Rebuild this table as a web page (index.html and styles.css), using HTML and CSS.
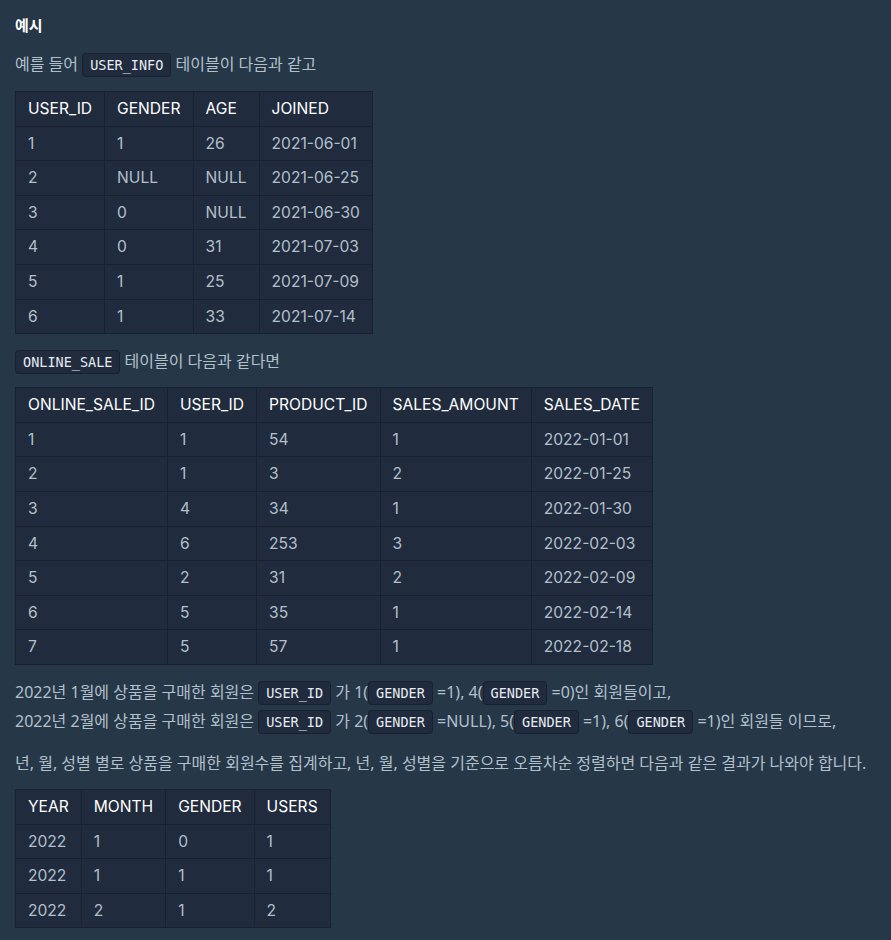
FILE: index.html
```html
<!DOCTYPE html>
<html lang="ko">
<head>
<meta charset="utf-8">
<link rel="stylesheet" href="styles.css">
</head>
<body>
<div class="markdown">
<h5 class="title">예시</h5>
<p class="para">예를 들어 <code>USER_INFO</code> 테이블이 다음과 같고</p>
<table class="tbl">
<thead><tr><th>USER_ID</th><th>GENDER</th><th>AGE</th><th>JOINED</th></tr></thead>
<tbody>
<tr><td>1</td><td>1</td><td>26</td><td>2021-06-01</td></tr>
<tr><td>2</td><td>NULL</td><td>NULL</td><td>2021-06-25</td></tr>
<tr><td>3</td><td>0</td><td>NULL</td><td>2021-06-30</td></tr>
<tr><td>4</td><td>0</td><td>31</td><td>2021-07-03</td></tr>
<tr><td>5</td><td>1</td><td>25</td><td>2021-07-09</td></tr>
<tr><td>6</td><td>1</td><td>33</td><td>2021-07-14</td></tr>
</tbody>
</table>
<p class="para tight">
<code>ONLINE_SALE</code> 테이블이 다음과 같다면</p>
<table class="tbl">
<thead><tr><th>ONLINE_SALE_ID</th><th>USER_ID</th><th>PRODUCT_ID</th><th>SALES_AMOUNT</th><th>SALES_DATE</th></tr></thead>
<tbody>
<tr><td>1</td><td>1</td><td>54</td><td>1</td><td>2022-01-01</td></tr>
<tr><td>2</td><td>1</td><td>3</td><td>2</td><td>2022-01-25</td></tr>
<tr><td>3</td><td>4</td><td>34</td><td>1</td><td>2022-01-30</td></tr>
<tr><td>4</td><td>6</td><td>253</td><td>3</td><td>2022-02-03</td></tr>
<tr><td>5</td><td>2</td><td>31</td><td>2</td><td>2022-02-09</td></tr>
<tr><td>6</td><td>5</td><td>35</td><td>1</td><td>2022-02-14</td></tr>
<tr><td>7</td><td>5</td><td>57</td><td>1</td><td>2022-02-18</td></tr>
</tbody>
</table>
<p class="para two">2022년 1월에 상품을 구매한 회원은 <code>USER_ID</code> 가 1(<code>GENDER</code> =1), 4(<code>GENDER</code> =0)인 회원들이고,<br>2022년 2월에 상품을 구매한 회원은 <code>USER_ID</code> 가 2(<code>GENDER</code> =NULL), 5(<code>GENDER</code> =1), 6(<code>GENDER</code> =1)인 회원들 이므로,</p>
<p class="para tight">년, 월, 성별 별로 상품을 구매한 회원수를 집계하고, 년, 월, 성별을 기준으로 오름차순 정렬하면 다음과 같은 결과가 나와야 합니다.</p>
<table class="tbl">
<thead><tr><th>YEAR</th><th>MONTH</th><th>GENDER</th><th>USERS</th></tr></thead>
<tbody>
<tr><td>2022</td><td>1</td><td>0</td><td>1</td></tr>
<tr><td>2022</td><td>1</td><td>1</td><td>1</td></tr>
<tr><td>2022</td><td>2</td><td>1</td><td>2</td></tr>
</tbody>
</table>
</div>
</body>
</html>
```
FILE: styles.css
```css
html, body {
  margin: 0;
  background: #263747;
}
body {
  font-family: "Noto Sans", "Noto Sans CJK KR", sans-serif;
  font-size: 16px;
  color: #b2c0cc;
}
.markdown {
  padding: 13px 15px 14px;
}
.title {
  margin: 0 0 9px;
  font-size: 15px;
  line-height: 24px;
  font-weight: 700;
  color: #ffffff;
}
.para {
  margin: 13px 0;
  line-height: 28px;
}
.tight {
  margin-bottom: 12px;
}
.two {
  line-height: 29px;
  margin-bottom: 7px;
}
code {
  font-family: "DejaVu Sans Mono", monospace;
  font-size: 13.5px;
  line-height: 1;
  color: #e6ecf1;
  background: #202b3d;
  border: 1px solid #172130;
  border-radius: 4px;
  padding: 3px 7px;
}
.tbl {
  border-collapse: collapse;
  background: #202b3d;
  margin: 0;
  font-family: "Inter", "Noto Sans CJK KR", sans-serif;
  font-size: 15.6px;
}
.tbl th, .tbl td {
  border: 1px solid #172130;
  padding: 4px 12px;
  line-height: 25.6px;
  text-align: left;
  font-weight: 400;
  white-space: nowrap;
}
.tbl th {
  color: #ffffff;
}
```
